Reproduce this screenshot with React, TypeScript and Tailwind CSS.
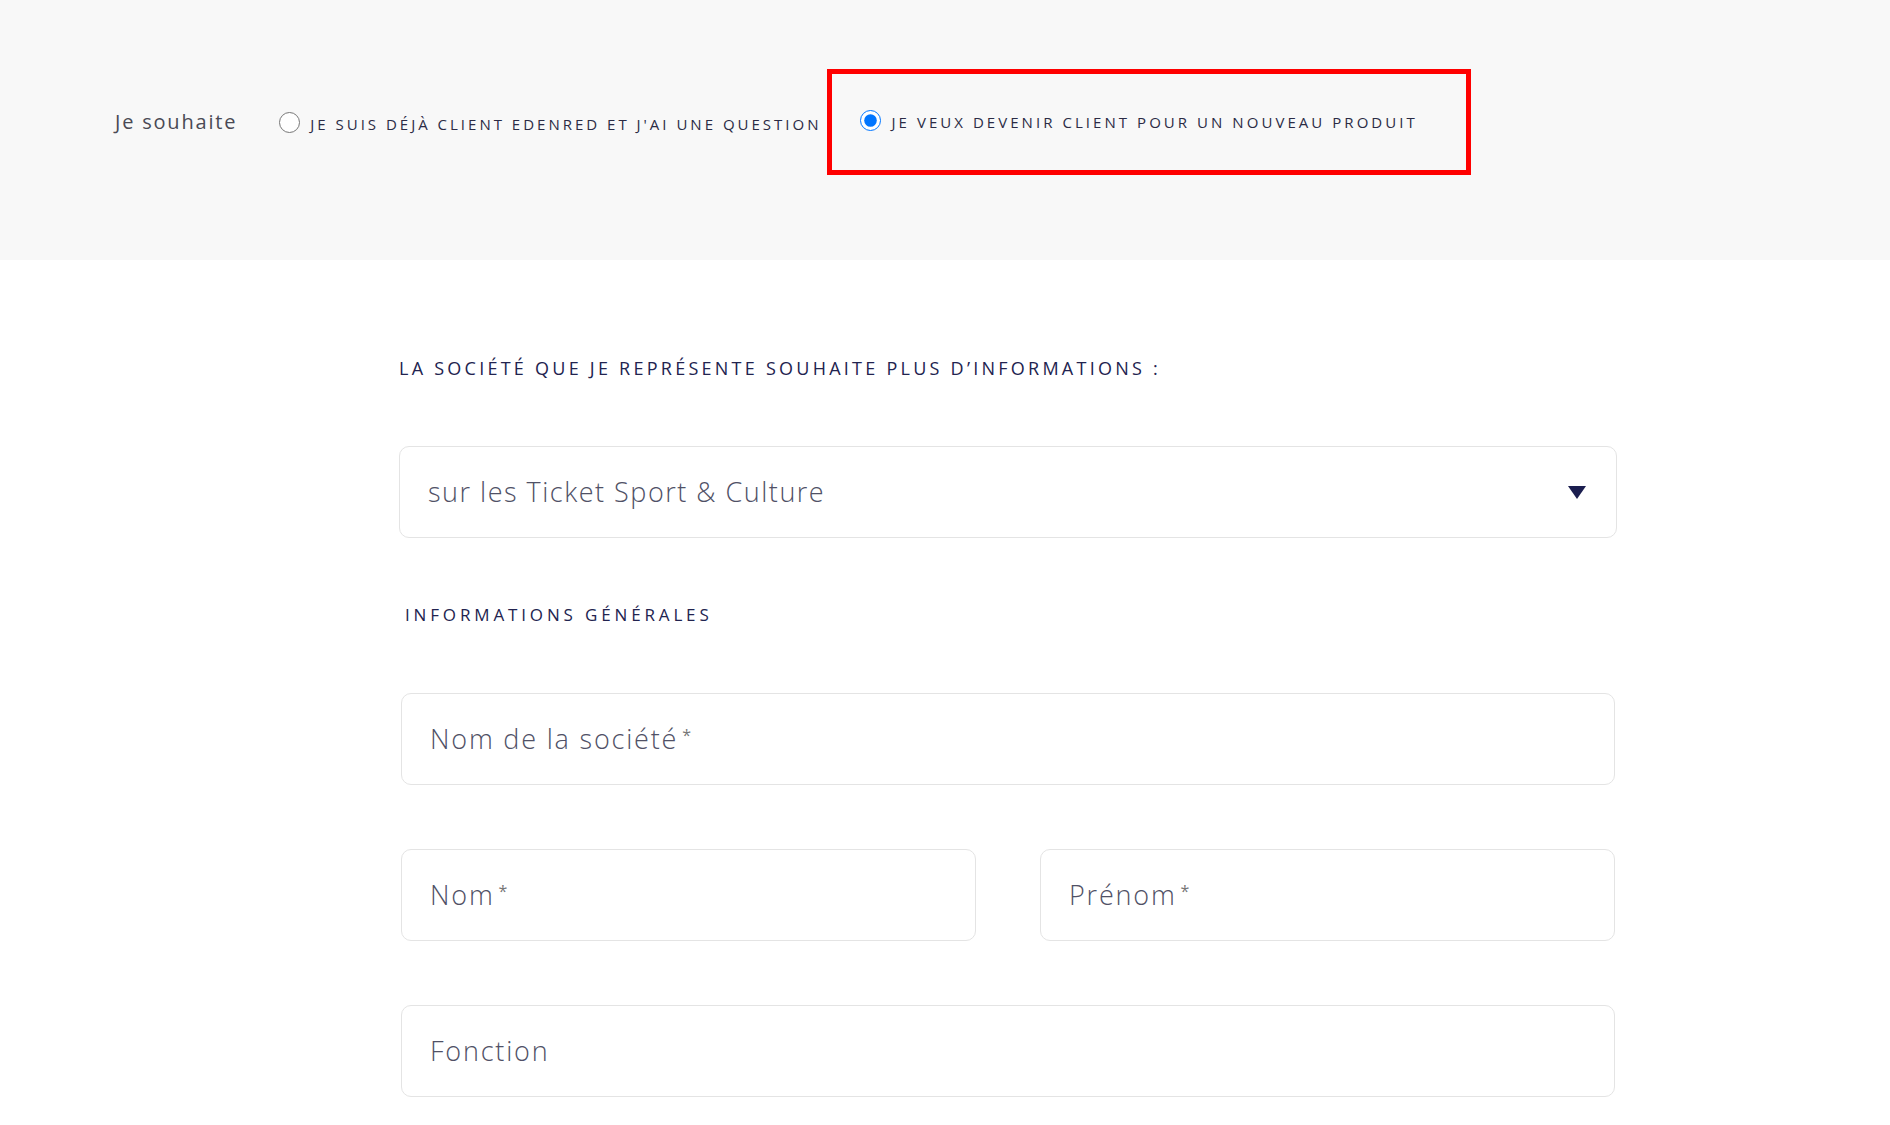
import { useState } from "react";

const font = "font-['Open_Sans','Liberation_Sans',sans-serif]";

type FieldProps = {
  label: string;
  required?: boolean;
};

function Field({ label, required = false }: FieldProps) {
  return (
    <div className="flex h-[92px] items-center rounded-[10px] border border-[#e4e4e4] bg-white pl-[28px]">
      <span className="text-[27px] font-light tracking-[1.8px] text-[#505166]">{label}</span>
      {required && <span className="ml-[4px] -mt-[8px] text-[16px] text-[#777]">*</span>}
    </div>
  );
}

export default function App() {
  const [choice, setChoice] = useState("new");

  return (
    <div className={`min-h-screen bg-white ${font}`}>
      <div className="h-[260px] bg-[#f8f8f8] pl-[115px] pt-[69px]">
        <div className="flex items-center">
          <span className="text-[20px] tracking-[1.8px] text-[#4a4a55]">Je souhaite</span>

          <label className="ml-[42px] flex items-center">
            <input
              type="radio"
              name="souhait"
              checked={choice === "question"}
              onChange={() => setChoice("question")}
              className="m-0 h-[21px] w-[21px] accent-[#0075ff]"
            />
            <span className="ml-[10px] mt-[4px] text-[15px] font-medium uppercase tracking-[3px] text-[#2b2b45]">
              Je suis déjà client Edenred et j'ai une question
            </span>
          </label>

          <div className="ml-[6px] flex h-[106px] w-[644px] items-center border-[5px] border-[#ff0000] pl-[28px] pb-[4px]">
            <label className="flex items-center">
              <input
                type="radio"
                name="souhait"
                checked={choice === "new"}
                onChange={() => setChoice("new")}
                className="m-0 h-[21px] w-[21px] accent-[#0075ff]"
              />
              <span className="ml-[10px] mt-[4px] text-[15px] font-medium uppercase tracking-[3.05px] text-[#2b2b45]">
                Je veux devenir client pour un nouveau produit
              </span>
            </label>
          </div>
        </div>
      </div>

      <div className="ml-[399px] w-[1218px] pt-[97px]">
        <h2 className="text-[18px] font-medium uppercase leading-[22px] tracking-[3.25px] text-[#22234f]">
          La société que je représente souhaite plus d’informations :
        </h2>

        <div className="mt-[67px] flex h-[92px] items-center justify-between rounded-[10px] border border-[#e4e4e4] bg-white pl-[28px] pr-[30px]">
          <span className="text-[27px] font-light tracking-[1.5px] text-[#505166]">sur les Ticket Sport &amp; Culture</span>
          <svg width="18" height="13" viewBox="0 0 18 13" className="block">
            <path d="M0 0 H18 L9 13 Z" fill="#1b1e4f" />
          </svg>
        </div>

        <h3 className="mt-[66px] pl-[6px] text-[17px] font-medium uppercase leading-[22px] tracking-[3.85px] text-[#22234f]">
          Informations générales
        </h3>

        <div className="mt-[67px] flex flex-col gap-[64px] px-[2px]">
          <Field label="Nom de la société" required />
          <div className="grid grid-cols-2 gap-x-[64px]">
            <Field label="Nom" required />
            <Field label="Prénom" required />
          </div>
          <Field label="Fonction" />
        </div>
      </div>
    </div>
  );
}
